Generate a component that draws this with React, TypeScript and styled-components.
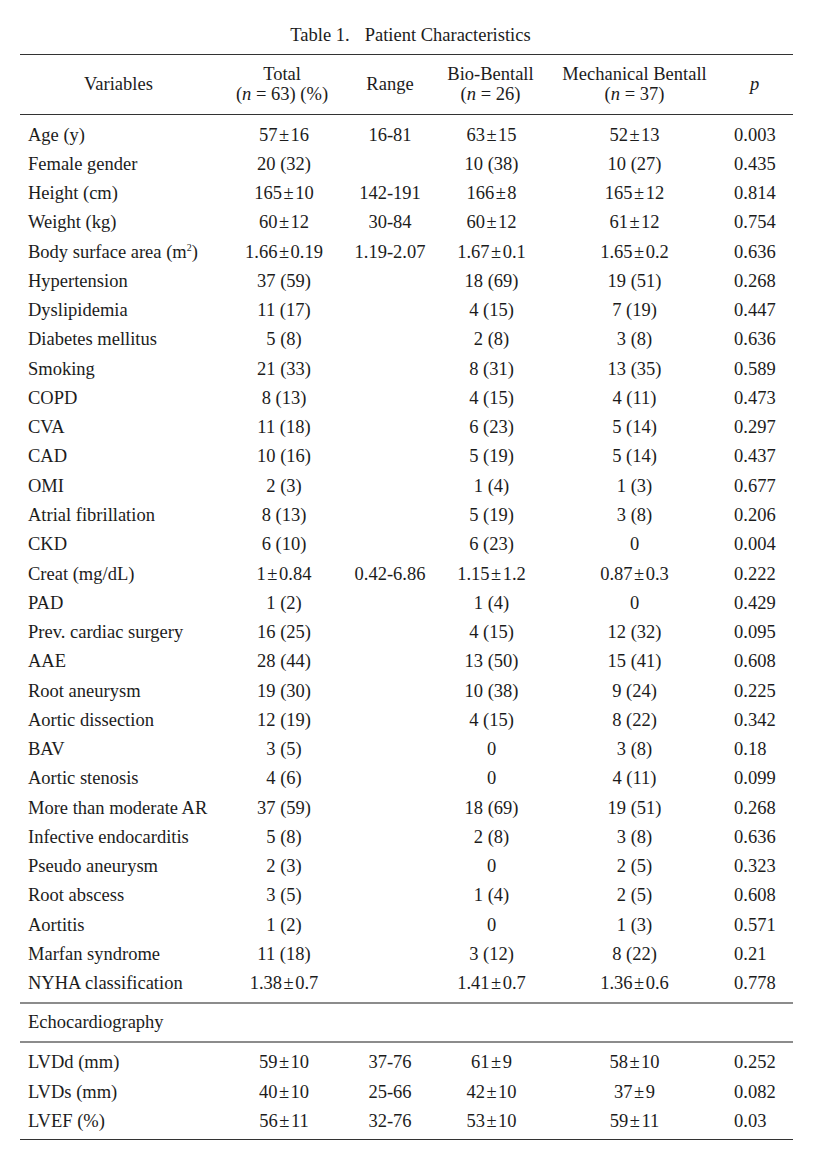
import styled, { createGlobalStyle } from "styled-components";

const GlobalStyle = createGlobalStyle`
  body {
    margin: 0;
    background: #ffffff;
    color: #1c1c1c;
    font-family: "Liberation Serif", "Times New Roman", serif;
  }
`;

const COLS = "210px 104px 112px 89px 199px 59px";

interface Fila {
  variavel: React.ReactNode;
  total: string;
  faixa?: string;
  bio: string;
  mec: string;
  p: string;
}

const linhas: Fila[] = [
  { variavel: "Age (y)", total: "57±16", faixa: "16-81", bio: "63±15", mec: "52±13", p: "0.003" },
  { variavel: "Female gender", total: "20 (32)", bio: "10 (38)", mec: "10 (27)", p: "0.435" },
  { variavel: "Height (cm)", total: "165±10", faixa: "142-191", bio: "166±8", mec: "165±12", p: "0.814" },
  { variavel: "Weight (kg)", total: "60±12", faixa: "30-84", bio: "60±12", mec: "61±12", p: "0.754" },
  {
    variavel: (
      <>
        Body surface area (m<sup>2</sup>)
      </>
    ),
    total: "1.66±0.19",
    faixa: "1.19-2.07",
    bio: "1.67±0.1",
    mec: "1.65±0.2",
    p: "0.636",
  },
  { variavel: "Hypertension", total: "37 (59)", bio: "18 (69)", mec: "19 (51)", p: "0.268" },
  { variavel: "Dyslipidemia", total: "11 (17)", bio: "4 (15)", mec: "7 (19)", p: "0.447" },
  { variavel: "Diabetes mellitus", total: "5 (8)", bio: "2 (8)", mec: "3 (8)", p: "0.636" },
  { variavel: "Smoking", total: "21 (33)", bio: "8 (31)", mec: "13 (35)", p: "0.589" },
  { variavel: "COPD", total: "8 (13)", bio: "4 (15)", mec: "4 (11)", p: "0.473" },
  { variavel: "CVA", total: "11 (18)", bio: "6 (23)", mec: "5 (14)", p: "0.297" },
  { variavel: "CAD", total: "10 (16)", bio: "5 (19)", mec: "5 (14)", p: "0.437" },
  { variavel: "OMI", total: "2 (3)", bio: "1 (4)", mec: "1 (3)", p: "0.677" },
  { variavel: "Atrial fibrillation", total: "8 (13)", bio: "5 (19)", mec: "3 (8)", p: "0.206" },
  { variavel: "CKD", total: "6 (10)", bio: "6 (23)", mec: "0", p: "0.004" },
  { variavel: "Creat (mg/dL)", total: "1±0.84", faixa: "0.42-6.86", bio: "1.15±1.2", mec: "0.87±0.3", p: "0.222" },
  { variavel: "PAD", total: "1 (2)", bio: "1 (4)", mec: "0", p: "0.429" },
  { variavel: "Prev. cardiac surgery", total: "16 (25)", bio: "4 (15)", mec: "12 (32)", p: "0.095" },
  { variavel: "AAE", total: "28 (44)", bio: "13 (50)", mec: "15 (41)", p: "0.608" },
  { variavel: "Root aneurysm", total: "19 (30)", bio: "10 (38)", mec: "9 (24)", p: "0.225" },
  { variavel: "Aortic dissection", total: "12 (19)", bio: "4 (15)", mec: "8 (22)", p: "0.342" },
  { variavel: "BAV", total: "3 (5)", bio: "0", mec: "3 (8)", p: "0.18" },
  { variavel: "Aortic stenosis", total: "4 (6)", bio: "0", mec: "4 (11)", p: "0.099" },
  { variavel: "More than moderate AR", total: "37 (59)", bio: "18 (69)", mec: "19 (51)", p: "0.268" },
  { variavel: "Infective endocarditis", total: "5 (8)", bio: "2 (8)", mec: "3 (8)", p: "0.636" },
  { variavel: "Pseudo aneurysm", total: "2 (3)", bio: "0", mec: "2 (5)", p: "0.323" },
  { variavel: "Root abscess", total: "3 (5)", bio: "1 (4)", mec: "2 (5)", p: "0.608" },
  { variavel: "Aortitis", total: "1 (2)", bio: "0", mec: "1 (3)", p: "0.571" },
  { variavel: "Marfan syndrome", total: "11 (18)", bio: "3 (12)", mec: "8 (22)", p: "0.21" },
  { variavel: "NYHA classification", total: "1.38±0.7", bio: "1.41±0.7", mec: "1.36±0.6", p: "0.778" },
];

const eco: Fila[] = [
  { variavel: "LVDd (mm)", total: "59±10", faixa: "37-76", bio: "61±9", mec: "58±10", p: "0.252" },
  { variavel: "LVDs (mm)", total: "40±10", faixa: "25-66", bio: "42±10", mec: "37±9", p: "0.082" },
  { variavel: "LVEF (%)", total: "56±11", faixa: "32-76", bio: "53±10", mec: "59±11", p: "0.03" },
];

const Pagina = styled.div`
  width: 773px;
  padding: 25px 21px 0 20px;
  font-size: 18.5px;
`;

const Titulo = styled.div`
  text-align: center;
  line-height: 20px;
  margin-bottom: 9px;
  padding-left: 8px;

  span {
    margin-left: 15px;
  }
`;

const Tabela = styled.div`
  border-top: 1.5px solid #333;
  border-bottom: 1.5px solid #333;
`;

const Cabecalho = styled.div`
  display: grid;
  grid-template-columns: ${COLS};
  align-items: center;
  height: 58.5px;
  border-bottom: 1.5px solid #333;
  line-height: 20px;
  text-align: center;
`;

const CelCab = styled.div<{ $esq?: number }>`
  text-align: ${(props) => (props.$esq !== undefined ? "left" : "center")};
  padding-left: ${(props) => props.$esq ?? 0}px;
  white-space: nowrap;
`;

const Grupo = styled.div<{ $topo: number; $base: number }>`
  padding-top: ${(props) => props.$topo}px;
  padding-bottom: ${(props) => props.$base}px;
`;

const Linha = styled.div`
  display: grid;
  grid-template-columns: ${COLS};
  align-items: center;
  height: 29.27px;
  line-height: 20px;
  white-space: nowrap;

  sup {
    font-size: 10px;
    line-height: 0;
    vertical-align: 7px;
  }
`;

const Celula = styled.div<{ $alinha?: "left" | "center"; $recuo?: number }>`
  text-align: ${(props) => props.$alinha ?? "center"};
  padding-left: ${(props) => props.$recuo ?? 0}px;
`;

const MaisMenos = styled.span`
  margin: 0 1.5px;
`;

const Secao = styled.div`
  border-top: 2px solid #8c8c8c;
  border-bottom: 2px solid #8c8c8c;
  height: 37px;
  display: flex;
  align-items: center;
  padding-left: 8px;
`;

const Italico = styled.i`
  font-style: italic;
`;

// separa o ± para dar o espaçamento do original
const Valor = ({ texto }: { texto: string }) => {
  const partes = texto.split("±");
  if (partes.length < 2) return <>{texto}</>;
  return (
    <>
      {partes[0]}
      <MaisMenos>±</MaisMenos>
      {partes[1]}
    </>
  );
};

const LinhaDados = ({ fila }: { fila: Fila }) => (
  <Linha>
    <Celula $alinha="left" $recuo={8}>
      {fila.variavel}
    </Celula>
    <Celula $recuo={4}>
      <Valor texto={fila.total} />
    </Celula>
    <Celula>{fila.faixa ?? ""}</Celula>
    <Celula $recuo={2}>
      <Valor texto={fila.bio} />
    </Celula>
    <Celula>
      <Valor texto={fila.mec} />
    </Celula>
    <Celula $alinha="left">{fila.p}</Celula>
  </Linha>
);

export default function App() {
  return (
    <>
      <GlobalStyle />
      <Pagina>
        <Titulo>
          Table 1.<span>Patient Characteristics</span>
        </Titulo>
        <Tabela>
          <Cabecalho>
            <CelCab $esq={64}>Variables</CelCab>
            <CelCab>
              Total
              <br />(<Italico>n</Italico> = 63) (%)
            </CelCab>
            <CelCab>Range</CelCab>
            <CelCab>
              Bio-Bentall
              <br />(<Italico>n</Italico> = 26)
            </CelCab>
            <CelCab>
              Mechanical Bentall
              <br />(<Italico>n</Italico> = 37)
            </CelCab>
            <CelCab $esq={16}>
              <Italico>p</Italico>
            </CelCab>
          </Cabecalho>
          <Grupo $topo={5.4} $base={4.4}>
            {linhas.map((fila, i) => (
              <LinhaDados key={i} fila={fila} />
            ))}
          </Grupo>
          <Secao>Echocardiography</Secao>
          <Grupo $topo={4.4} $base={3.4}>
            {eco.map((fila, i) => (
              <LinhaDados key={i} fila={fila} />
            ))}
          </Grupo>
        </Tabela>
      </Pagina>
    </>
  );
}
